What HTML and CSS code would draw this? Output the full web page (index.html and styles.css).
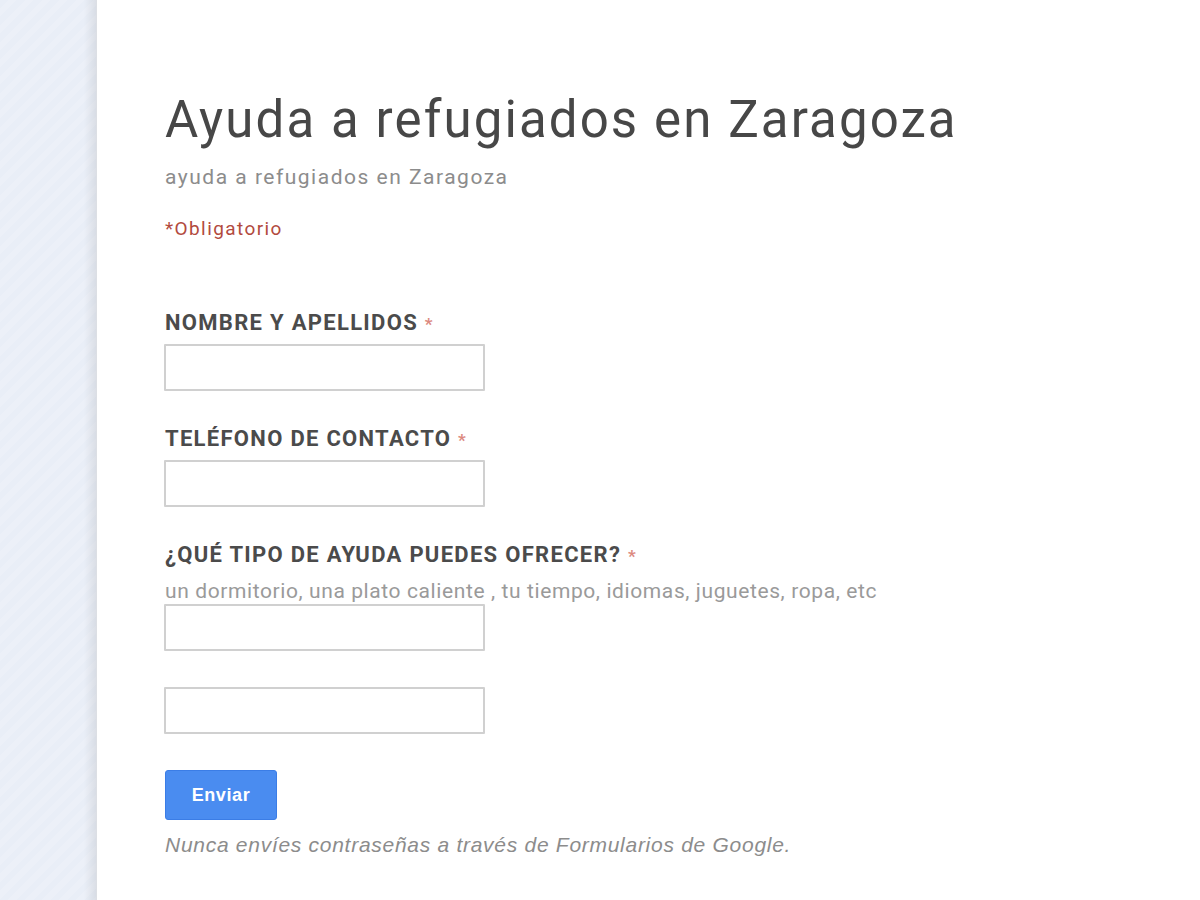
FILE: index.html
```html
<!DOCTYPE html>
<html lang="es">
  <head>
    <meta charset="UTF-8">
    <title>Ayuda a refugiados en Zaragoza</title>
    <link rel="stylesheet" href="styles.css">
  </head>
  <body>
    <div class="page">
      <div class="side"></div>
      <div class="sheet">
        <h1 class="form-title">Ayuda a refugiados en Zaragoza</h1>
        <div class="form-desc">ayuda a refugiados en Zaragoza</div>
        <div class="required-note">*Obligatorio</div>

        <form class="form">
          <div class="item">
            <label class="item-title" for="nombre">NOMBRE Y APELLIDOS <span class="star">*</span></label>
            <input type="text" id="nombre" class="text-input">
          </div>

          <div class="item">
            <label class="item-title" for="telefono">TELÉFONO DE CONTACTO <span class="star">*</span></label>
            <input type="text" id="telefono" class="text-input">
          </div>

          <div class="item">
            <label class="item-title" for="ayuda">¿QUÉ TIPO DE AYUDA PUEDES OFRECER? <span class="star">*</span></label>
            <div class="help-text">un dormitorio, una plato caliente , tu tiempo, idiomas, juguetes, ropa, etc</div>
            <input type="text" id="ayuda" class="text-input">
          </div>

          <div class="item">
            <input type="text" class="text-input">
          </div>

          <div class="submit-row">
            <button type="submit" class="submit">Enviar</button>
          </div>
          <div class="password-warning">Nunca envíes contraseñas a través de Formularios de Google.</div>
        </form>
      </div>
    </div>
  </body>
</html>
```

FILE: styles.css
```css
:root {
  --text-color: #404040;
  --muted-color: #8c8c8c;
  --help-color: #9a9a9a;
  --required-color: #b24a3e;
  --star-color: #dc8a80;
  --input-border: #d0d0d0;
  --button-blue: #4a8cf0;
}

html,
body {
  margin: 0;
  height: 100%;
}

body {
  font-family: Roboto, 'Liberation Sans', sans-serif;
  color: var(--text-color);
  background: #fff;
}

.page {
  display: flex;
  height: 900px;
  overflow: hidden;
}

.side {
  width: 97px;
  flex-shrink: 0;
  background:
    linear-gradient(to right, rgba(0, 0, 0, 0) 84px, rgba(0, 0, 0, 0.08) 97px),
    repeating-linear-gradient(135deg, #e9eef7 0, #e9eef7 6px, #ecf0f8 6px, #ecf0f8 12px);
}

.sheet {
  flex: 1;
  background: #fff;
  padding: 88px 0 0 68px;
  box-shadow: -1px 0 0 #dcdfe4;
}

.form-title {
  margin: 0;
  font-size: 51px;
  font-weight: 400;
  line-height: 64px;
  letter-spacing: 2.1px;
  color: #474747;
}

.form-desc {
  margin-top: 13px;
  font-size: 21px;
  line-height: 24px;
  letter-spacing: 1.5px;
  color: var(--muted-color);
}

.required-note {
  margin-top: 28px;
  font-size: 19px;
  line-height: 24px;
  letter-spacing: 1.4px;
  color: var(--required-color);
}

.form {
  margin-top: 70px;
  display: flex;
  flex-direction: column;
}

.item {
  display: flex;
  flex-direction: column;
  align-items: flex-start;
  margin-bottom: 36px;
}

.item-title {
  font-size: 22px;
  font-weight: 700;
  line-height: 24px;
  letter-spacing: 1.3px;
  color: #4b4b4b;
  margin-bottom: 8px;
}

.star {
  color: var(--star-color);
  font-size: 17px;
}

.help-text {
  font-size: 21px;
  line-height: 22px;
  letter-spacing: 0.6px;
  color: var(--help-color);
  margin-top: 4px;
  margin-bottom: 2px;
}

.text-input {
  width: 321px;
  height: 47px;
  box-sizing: border-box;
  border: 2px solid var(--input-border);
  border-radius: 1px;
  background: #fff;
  margin: 0 0 0 -1px;
  padding: 0 8px;
  font-size: 18px;
}

.submit {
  width: 112px;
  height: 50px;
  border: 1px solid #3b7de6;
  border-radius: 3px;
  background: var(--button-blue);
  color: #fff;
  font-family: 'Liberation Sans', Arial, sans-serif;
  font-size: 18px;
  font-weight: 700;
  letter-spacing: 0.6px;
  padding: 0;
}

.password-warning {
  margin-top: 12px;
  font-family: 'Liberation Sans', Arial, sans-serif;
  font-style: italic;
  font-size: 21px;
  line-height: 26px;
  color: var(--muted-color);
  letter-spacing: 0.72px;
}
```
